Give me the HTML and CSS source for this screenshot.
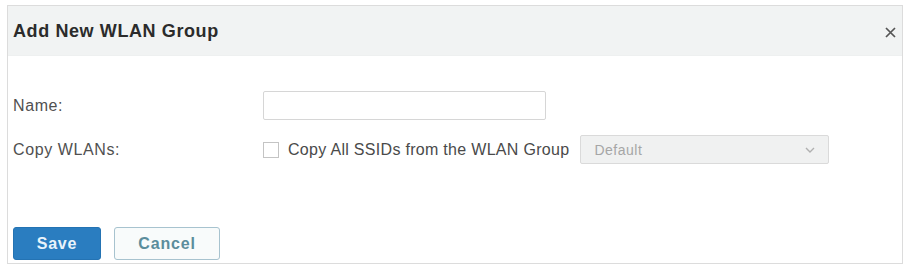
FILE: index.html
```html
<!DOCTYPE html>
<html>
<head>
<meta charset="utf-8">
<link rel="stylesheet" href="styles.css">
</head>
<body>
<div class="dialog">
  <div class="header">
    <span class="title">Add New WLAN Group</span>
    <svg class="close" width="11" height="11" viewBox="0 0 11 11"><path d="M1 1 L10 10 M10 1 L1 10" stroke="#555" stroke-width="1.7" fill="none"/></svg>
  </div>
  <div class="body">
    <div class="form">
      <label class="label">Name:</label>
      <div class="field"><input class="text-input" type="text"></div>
      <label class="label">Copy WLANs:</label>
      <div class="field copy">
        <span class="checkbox"></span>
        <span class="check-text">Copy All SSIDs from the WLAN Group</span>
        <div class="select">
          <span>Default</span>
          <svg class="chev" width="10" height="6" viewBox="0 0 10 6"><path d="M1 1 L5 5 L9 1" fill="none" stroke="#b0b0b0" stroke-width="1.4"/></svg>
        </div>
      </div>
    </div>
  </div>
  <div class="footer">
    <button class="btn save">Save</button>
    <button class="btn cancel">Cancel</button>
  </div>
</div>
</body>
</html>
```
FILE: styles.css
```css
html, body { margin: 0; padding: 0; background: #ffffff; }
body { font-family: "Liberation Sans", Arial, sans-serif; }
.dialog {
  margin: 5px 0 0 7px;
  width: 894px;
  height: 257px;
  border: 1px solid #dcdcdc;
  display: flex;
  flex-direction: column;
}
.header {
  height: 49px;
  background: #f1f3f3;
  display: flex;
  align-items: center;
  justify-content: space-between;
  padding: 0 6px 0 5px;
  border-bottom: 1px solid #eef0f0;
}
.title { font-size: 18px; font-weight: bold; color: #2b2b2b; margin-top: 2px; letter-spacing: 0.6px; }
.close { margin-top: 4px; }
.body { padding: 35px 0 0 5px; flex: 1; }
.form {
  display: grid;
  grid-template-columns: 250px auto;
  row-gap: 15px;
  align-items: center;
}
.label { font-size: 16px; color: #505050; letter-spacing: 0.6px; }
.field { display: flex; align-items: center; }
.text-input {
  width: 283px;
  height: 29px;
  box-sizing: border-box;
  border: 1px solid #d6d6d6;
  border-radius: 2px;
  margin: 0;
}
.checkbox {
  width: 16px; height: 16px;
  border: 1px solid #c4c4c4;
  box-sizing: border-box;
  background: #fff;
}
.check-text { font-size: 16px; color: #4a4a4a; margin-left: 9px; letter-spacing: 0.3px; white-space: nowrap; }
.select {
  margin-left: 11px;
  width: 249px;
  height: 29px;
  box-sizing: border-box;
  border: 1px solid #dadada;
  border-radius: 2px;
  background: #f0f1f1;
  display: flex;
  align-items: center;
  justify-content: space-between;
  padding: 0 13px 0 13px;
  font-size: 14px;
  letter-spacing: 0.5px;
  color: #a6a6a6;
}
.footer { display: flex; gap: 13px; padding: 0 0 3px 5px; }
.btn {
  height: 33px;
  border-radius: 3px;
  font-family: "Liberation Sans", Arial, sans-serif;
  font-size: 16px;
  font-weight: bold;
  letter-spacing: 0.8px;
  margin: 0;
}
.save { width: 88px; background: #2a7dc0; color: #e8f3fb; border: 1px solid #2473b3; }
.cancel { width: 106px; background: #f8fbfb; color: #5b8d9c; border: 1px solid #a7c3cf; }
```
